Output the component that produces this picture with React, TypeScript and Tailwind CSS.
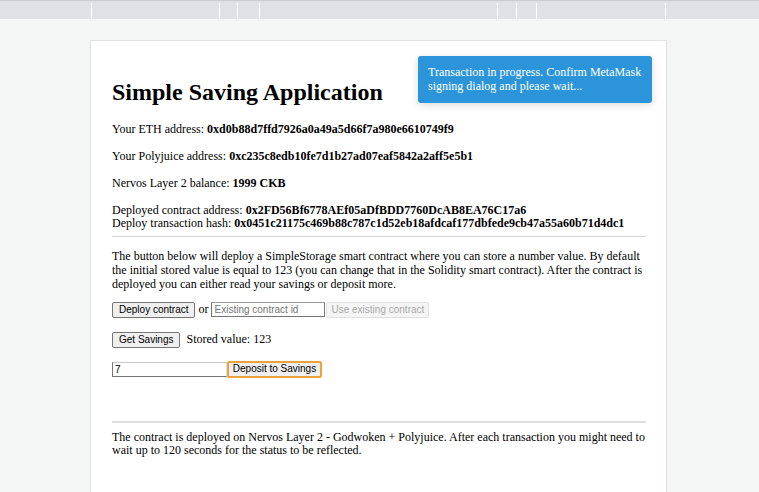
const segments = [92, 128, 18, 22, 238, 19, 20, 129, 93];

function TopBar() {
  return (
    <div className="h-[19px] border-t border-[#c9ccd1] bg-[#dfe1e5] flex items-stretch">
      {segments.map((w, i) => (
        <div key={i} className="h-full pt-[2px]" style={{ width: w }}>
          <div
            className={`h-full ${
              i < segments.length - 1 ? "border-r border-white" : ""
            }`}
          />
        </div>
      ))}
    </div>
  );
}

const btn =
  "h-[16px] px-[6px] text-[10px] leading-none rounded-[2px] border border-[#767676] bg-[#efefef] text-black font-['Liberation_Sans',Arial,sans-serif]";

export default function App() {
  return (
    <div className="min-h-[492px] bg-[#f4f6f5] font-['Liberation_Serif','Times_New_Roman',serif] text-[12px] leading-[13.5px] text-black overflow-hidden relative">
      <TopBar />
      <div className="mt-[21px] ml-[90px] w-[577px] min-h-[460px] bg-white border border-[#e2e2e2] pt-[38px] pl-[21px] pr-[20px]">
        <h1 className="text-[24px] font-bold leading-[27.6px] mb-[16px]">
          Simple Saving Application
        </h1>
        <p>
          Your ETH address: <b>0xd0b88d7ffd7926a0a49a5d66f7a980e6610749f9</b>
        </p>
        <p className="mt-[13.5px]">
          Your Polyjuice address:{" "}
          <b>0xc235c8edb10fe7d1b27ad07eaf5842a2aff5e5b1</b>
        </p>
        <p className="mt-[13.5px]">
          Nervos Layer 2 balance: <b>1999 CKB</b>
        </p>
        <div className="mt-[13.5px] leading-[13px]">
          Deployed contract address:{" "}
          <b>0x2FD56Bf6778AEf05aDfBDD7760DcAB8EA76C17a6</b>
          <br />
          Deploy transaction hash:{" "}
          <b>0x0451c21175c469b88c787c1d52eb18afdcaf177dbfede9cb47a55a60b71d4dc1</b>
        </div>
        <hr className="mt-[6px] border-t border-[#d4d4d4]" />
        <p className="mt-[12px] leading-[14px]">
          The button below will deploy a SimpleStorage smart contract where you
          can store a number value. By default the initial stored value is equal
          to 123 (you can change that in the Solidity smart contract). After the
          contract is deployed you can either read your savings or deposit more.
        </p>
        <div className="mt-[11px] flex items-center h-[16px]">
          <button className={btn}>Deploy contract</button>
          <span className="px-[3px]">or</span>
          <input
            placeholder="Existing contract id"
            className="h-[15px] w-[114px] border border-[#767676] border-t-[#9a9a9a] px-[2px] text-[10px] font-['Liberation_Sans',Arial,sans-serif] placeholder:text-[#757575] outline-none"
          />
          <button
            disabled
            className="ml-[1px] h-[16px] px-[4px] text-[10px] leading-none rounded-[2px] border border-[#e0e0e0] bg-[#f5f5f5] text-[#a8a8a8] font-['Liberation_Sans',Arial,sans-serif]"
          >
            Use existing contract
          </button>
        </div>
        <div className="mt-[14px] flex items-center h-[16px]">
          <button className={btn}>Get Savings</button>
          <span className="ml-[6px]">Stored value: 123</span>
        </div>
        <div className="mt-[13px] flex items-center h-[17px]">
          <input
            defaultValue="7"
            className="h-[15px] w-[115px] border border-[#767676] border-t-[#c8c8c8] border-r-[#e0e0e0] px-[2px] text-[10px] font-['Liberation_Sans',Arial,sans-serif] outline-none"
          />
          <button className="h-[17px] w-[95px] text-[10px] leading-none rounded-[2px] border-2 border-[#eda33b] bg-[#efefef] text-black font-['Liberation_Sans',Arial,sans-serif]">
            Deposit to Savings
          </button>
        </div>
        <hr className="mt-[43px] border-t-2 border-[#dedede]" />
        <p className="mt-[8px] leading-[13px]">
          The contract is deployed on Nervos Layer 2 - Godwoken + Polyjuice.
          After each transaction you might need to wait up to 120 seconds for the
          status to be reflected.
        </p>
      </div>
      <div className="absolute left-[418px] top-[56px] w-[234px] h-[47px] rounded-[3px] bg-[#2c95da] text-white px-[10px] pt-[9px] leading-[14px] shadow-[0_2px_8px_rgba(0,0,0,0.15)]">
        Transaction in progress. Confirm MetaMask signing dialog and please
        wait...
      </div>
    </div>
  );
}
